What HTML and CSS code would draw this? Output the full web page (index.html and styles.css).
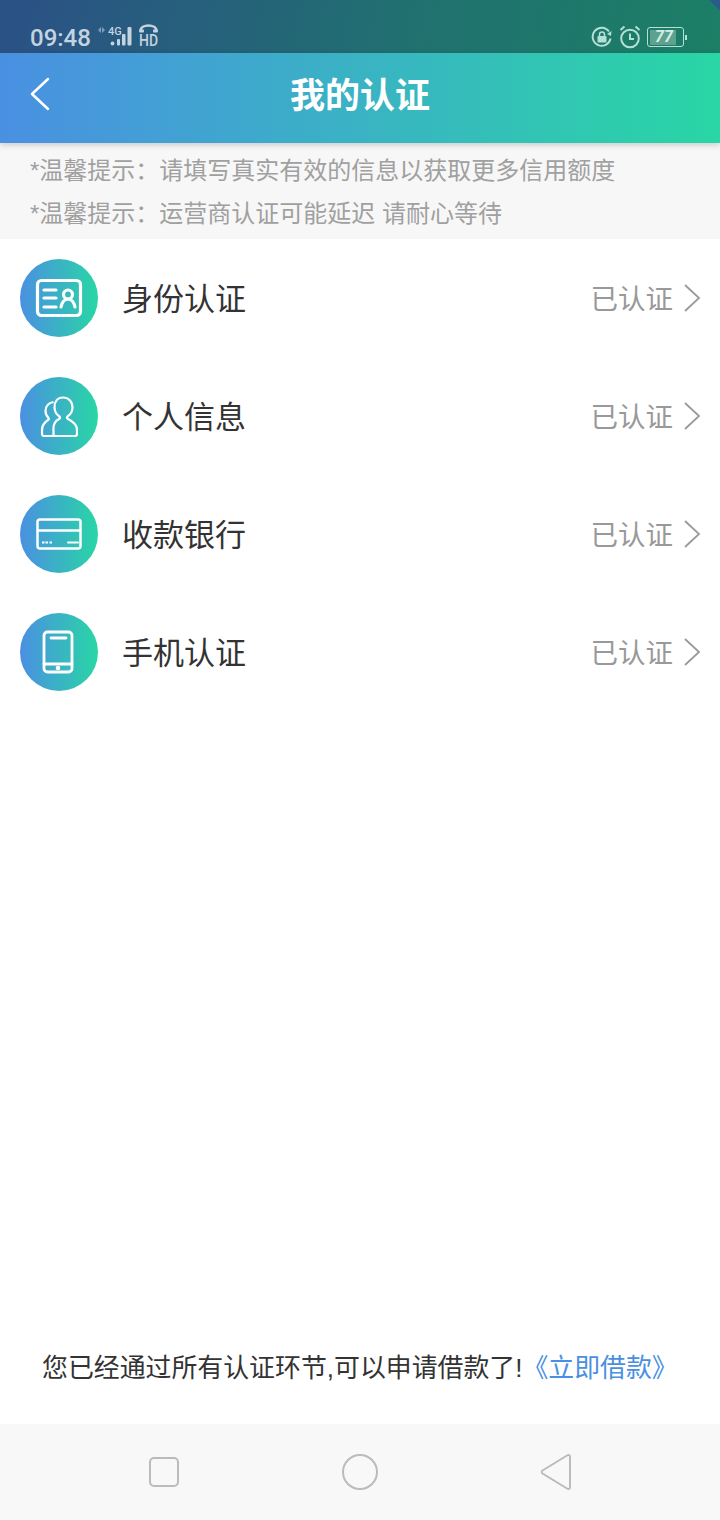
FILE: index.html
```html
<!DOCTYPE html>
<html>
<head>
<meta charset="utf-8"/>
<title>我的认证</title>
<link rel="stylesheet" href="styles.css">
</head>
<body>
  <div class="status">
    <div class="status-left">
      <span class="time">09:48</span>
      <svg class="signal" width="70" height="30" viewBox="0 0 70 30">
        <path d="M4 10l3-3v6zM8 7l3 3-3 3z" fill="#7f9fb8"/>
        <text x="14" y="15" class="mini">4G</text>
        <g fill="#c3d3e0">
          <circle cx="18.500" cy="23.500" r="1.900"/>
          <rect x="23" y="19" width="3" height="6.500" rx="1"/>
          <rect x="28" y="14" width="3.500" height="11.500" rx="1"/>
          <rect x="33.500" y="7" width="4" height="18.500" rx="1"/>
        </g>
        <path d="M46.500 11c0-7.500 16-7.500 16 0" fill="none" stroke="#c3d3e0" stroke-width="2.500"/>
        <rect x="45" y="9.500" width="5" height="3" rx="1" fill="#c3d3e0"/>
        <rect x="59" y="9.500" width="5" height="3" rx="1" fill="#c3d3e0"/>
        <text x="45" y="25.500" class="hd" textLength="19" lengthAdjust="spacingAndGlyphs">HD</text>
      </svg>
    </div>
    <div class="status-right">
      <svg width="22" height="22" viewBox="0 0 22 22">
        <path d="M19.500 12.500a9 9 0 1 1-1.500-7" fill="none" stroke="#b5e0d5" stroke-width="2"/>
        <path d="M20.500 5l-.5 5-4-2z" fill="#b5e0d5"/>
        <rect x="6.500" y="10" width="9" height="6.500" rx="1" fill="#b5e0d5"/>
        <path d="M8.500 10V8.500a2.500 2.500 0 0 1 5 0V10" fill="none" stroke="#b5e0d5" stroke-width="1.500"/>
      </svg>
      <svg width="22" height="24" viewBox="0 0 22 24">
        <circle cx="11" cy="13.500" r="8.800" fill="none" stroke="#b5e0d5" stroke-width="2"/>
        <path d="M11 8.500v5.500h4M1.500 5l4-3.500M20.500 5l-4-3.500" fill="none" stroke="#b5e0d5" stroke-width="2"/>
      </svg>
      <div class="battery">
        <div class="battery-box"><span class="battery-fill"></span><span class="battery-num">77</span></div>
        <span class="battery-tip"></span>
      </div>
    </div>
  </div>

  <div class="header">
    <svg class="back" width="20" height="34" viewBox="0 0 20 34"><path d="M18 2L2 17l16 15" fill="none" stroke="#fff" stroke-width="2.500" stroke-linecap="round" stroke-linejoin="round"/></svg>
    <div class="title">我的认证</div>
  </div>

  <div class="tips">
    <p>*温馨提示：请填写真实有效的信息以获取更多信用额度</p>
    <p>*温馨提示：运营商认证可能延迟 请耐心等待</p>
  </div>

  <div class="list">
    <div class="row">
      <div class="icon">
        <svg width="48" height="40" viewBox="0 0 48 40" fill="none" stroke="#fff" stroke-width="3.200" stroke-linecap="round">
          <rect x="2.500" y="2.500" width="43" height="35" rx="4"/>
          <path d="M9 12h12M9 20h12M9 29h12"/>
          <circle cx="33" cy="16.500" r="4.500"/>
          <path d="M26 29c1-5 4-8 7-8s6 3 7 8"/>
        </svg>
      </div>
      <span class="name">身份认证</span>
      <span class="state">已认证</span>
      <svg class="arrow" width="18" height="28" viewBox="0 0 18 28"><path d="M2 1l14 13L2 27" fill="none" stroke="#999" stroke-width="1.800"/></svg>
    </div>
    <div class="row">
      <div class="icon">
        <svg width="38" height="42" viewBox="0 0 38 42" fill="none" stroke="#fff" stroke-width="2.200" stroke-linejoin="round">
          <path d="M13.500 41H35c1.500 0 2-.5 2-2v-4c0-6-5-9-9-11-1-.5-1.500-1.500-.5-2.500 3-2 5-5 5-9 0-6-4-10-9.500-10S14.500 6.500 14.500 12.500c0 4 2 7 5 9 1 1 .5 2-.5 2.500-4 2-6 5-5.500 11z"/>
          <path d="M13.500 41H4c-1.500 0-2-.5-2-2v-4c0-5 3-8 6-10 1-.5 1-1.500.5-2-2-2-3-4-3-7 0-5 3-8 8-9"/>
        </svg>
      </div>
      <span class="name">个人信息</span>
      <span class="state">已认证</span>
      <svg class="arrow" width="18" height="28" viewBox="0 0 18 28"><path d="M2 1l14 13L2 27" fill="none" stroke="#999" stroke-width="1.800"/></svg>
    </div>
    <div class="row">
      <div class="icon">
        <svg width="46" height="32" viewBox="0 0 46 32" fill="none" stroke="#fff" stroke-width="2.500" stroke-linecap="round">
          <rect x="1.500" y="1.500" width="43" height="29" rx="2.500"/>
          <path d="M2 12.500h42"/>
          <path d="M32 24.500h10" stroke-width="2"/>
          <path d="M6 24.500h2.500M9.500 24.500H12M13.500 24.500H16" stroke-width="2" stroke-linecap="butt"/>
        </svg>
      </div>
      <span class="name">收款银行</span>
      <span class="state">已认证</span>
      <svg class="arrow" width="18" height="28" viewBox="0 0 18 28"><path d="M2 1l14 13L2 27" fill="none" stroke="#999" stroke-width="1.800"/></svg>
    </div>
    <div class="row">
      <div class="icon">
        <svg class="phone" width="32" height="44" viewBox="0 0 32 44" fill="none" stroke="#fff" stroke-width="2.800" stroke-linecap="round">
          <rect x="2" y="2" width="28" height="40" rx="3.500"/>
          <path d="M2 34h28"/>
          <path d="M9 8h15"/>
          <circle cx="16" cy="38" r=".9" fill="#fff"/>
        </svg>
      </div>
      <span class="name">手机认证</span>
      <span class="state">已认证</span>
      <svg class="arrow" width="18" height="28" viewBox="0 0 18 28"><path d="M2 1l14 13L2 27" fill="none" stroke="#999" stroke-width="1.800"/></svg>
    </div>
  </div>

  <div class="notice">您已经通过所有认证环节,可以申请借款了!<a class="link">《立即借款》</a></div>

  <div class="navbar">
    <svg width="32" height="32" viewBox="0 0 32 32"><rect x="2" y="2" width="28" height="28" rx="4" fill="none" stroke="#bbb" stroke-width="2"/></svg>
    <svg width="38" height="38" viewBox="0 0 38 38"><circle cx="19" cy="19" r="17" fill="none" stroke="#bbb" stroke-width="2"/></svg>
    <svg width="32" height="38" viewBox="0 0 32 38"><path d="M2.500 17.500L27 2.500c1.500-1 3-.5 3 1.500v30c0 2-1.500 2.500-3 1.500L2.500 20.500c-1-.8-1-2.200 0-3z" fill="none" stroke="#bbb" stroke-width="2"/></svg>
  </div>
</body>
</html>
```
FILE: styles.css
```css
*{
  padding:0;
  margin:0;
  box-sizing:border-box;
}
html,body{
  height:1520px;
  overflow:hidden;
}
body{
  width:720px;
  background:#fff;
  display:flex;
  flex-direction:column;
  font-family:"Liberation Sans","Noto Sans CJK SC",sans-serif;
}
.status{
  height:53px;
  flex:none;
  display:flex;
  justify-content:space-between;
  align-items:flex-end;
  padding:0 33px 1px 30px;
  background:linear-gradient(225deg,#2c5a8a 0,#2c5a8a 7px,transparent 8px),linear-gradient(100deg,#2b5186,#20726f 60%,#1c7f66);
}
.status-left,.status-right{
  display:flex;
  align-items:center;
}
.status-left{
  align-items:flex-end;
  gap:3px;
  padding-bottom:2px;
}
.status-right{
  gap:6px;
  padding-bottom:3px;
}
.time{
  font-family:"Roboto",sans-serif;
  font-size:24px;
  font-weight:500;
  line-height:24px;
  color:#c3d3e0;
}
.mini{
  font-family:"Roboto",sans-serif;
  font-size:11px;
  font-weight:500;
  fill:#c3d3e0;
}
.hd{
  font-family:"Roboto",sans-serif;
  font-size:16px;
  font-weight:500;
  fill:#c3d3e0;
}
.battery{
  display:flex;
  align-items:center;
  gap:1px;
}
.battery-box{
  position:relative;
  width:37px;
  height:20px;
  border:1.500px solid #b5e0d5;
  border-radius:3px;
  padding:1.500px;
}
.battery-fill{
  display:block;
  width:26px;
  height:100%;
  background:#5da18f;
}
.battery-num{
  position:absolute;
  left:7px;
  top:-1px;
  font-family:"Roboto",sans-serif;
  font-size:16px;
  font-weight:700;
  font-style:italic;
  line-height:19px;
  color:#d6eee7;
}
.battery-tip{
  width:2px;
  height:5px;
  background:#b5e0d5;
}
.header{
  height:90px;
  flex:none;
  display:flex;
  align-items:center;
  justify-content:center;
  position:relative;
  padding-bottom:12px;
  background:linear-gradient(90deg,#4a90e2,#29d6a5);
  box-shadow:0 2px 6px rgba(0,0,0,.18);
}
.back{
  position:absolute;
  left:30px;
  top:24px;
}
.title{
  font-size:35px;
  font-weight:700;
  color:#fff;
}
.tips{
  height:96px;
  flex:none;
  padding:7px 0 0 30px;
  background:#f7f7f7;
  font-size:24px;
  line-height:42.500px;
  color:#a0a0a0;
}
.list{
  flex:1;
}
.row{
  height:118px;
  display:flex;
  align-items:center;
  padding:0 19px 0 20px;
}
.icon{
  width:78px;
  height:78px;
  flex:none;
  border-radius:50%;
  display:flex;
  align-items:center;
  justify-content:center;
  background:linear-gradient(90deg,#4a90e2,#29d6a5);
}
.phone{
  margin-right:2px;
}
.name{
  flex:1;
  margin-left:24px;
  padding-bottom:4px;
  font-size:31px;
  color:#333;
}
.state{
  font-size:27.500px;
  color:#999;
  margin-right:10px;
  padding-bottom:2px;
}
.notice{
  height:56px;
  flex:none;
  margin-bottom:28px;
  padding-left:42px;
  font-size:25.900px;
  line-height:56px;
  color:#333;
}
.link{
  color:#4a90e2;
}
.navbar{
  height:96px;
  flex:none;
  display:flex;
  align-items:center;
  justify-content:space-between;
  padding:0 148px 0 148px;
  background:#f8f8f8;
}
```
